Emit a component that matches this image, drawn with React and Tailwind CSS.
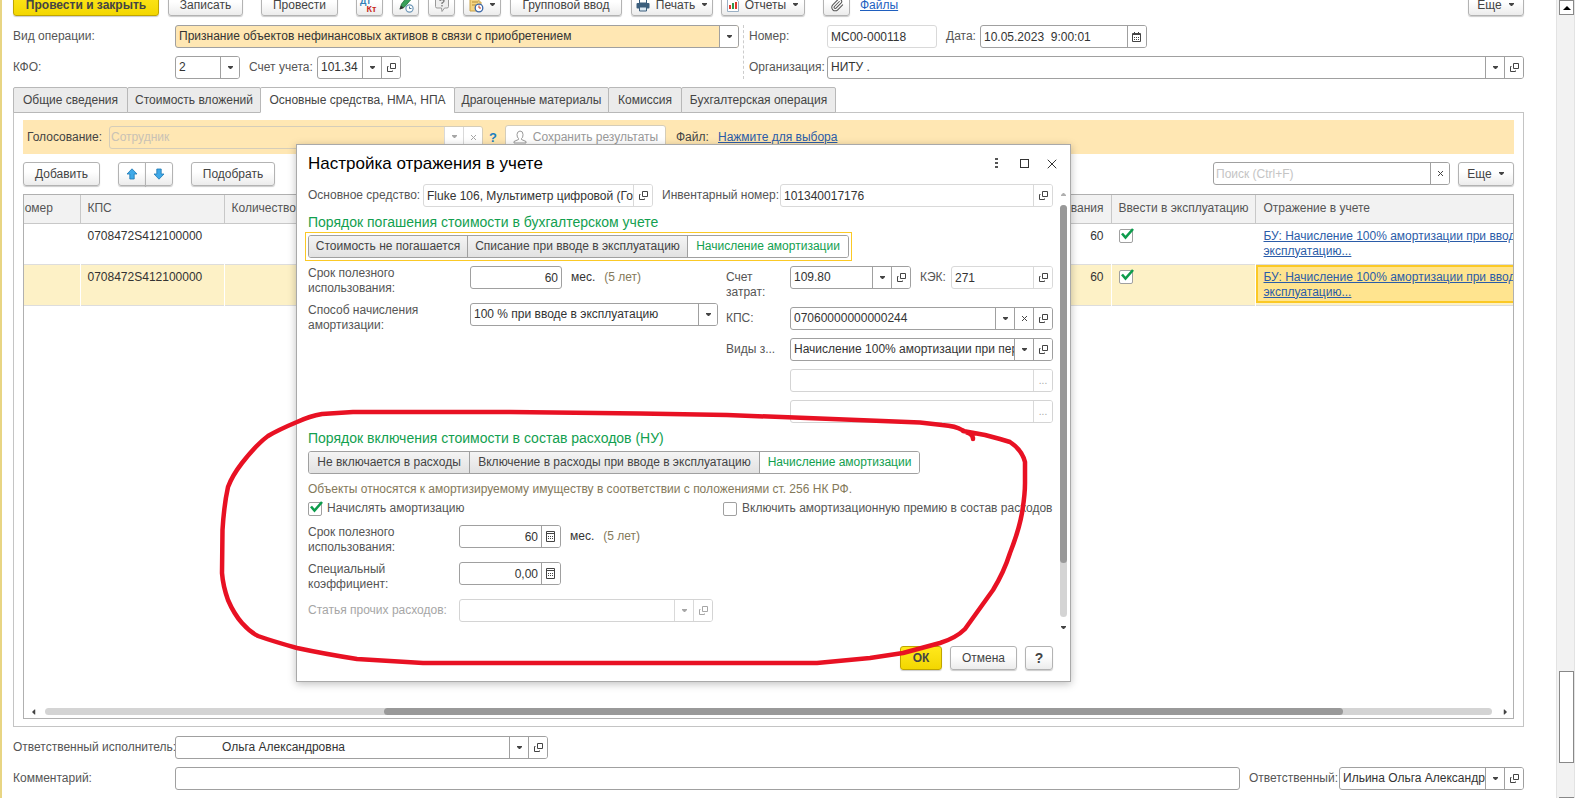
import { useId } from 'react';
import { Paperclip, X } from 'lucide-react';

const DownIcon = ({ className = '' }) => (
  <svg className={className} width="7" height="4" viewBox="0 0 7 4" fill="currentColor" aria-hidden="true">
    <path d="M1 0h5v1L4 3H3L1 1z" />
  </svg>
);

const OpenIcon = () => (
  <svg width="11" height="11" viewBox="0 0 11 11" fill="none" stroke="currentColor" aria-hidden="true">
    <path d="M4.5 1.5h5v5h-5z" />
    <path d="M2.5 4.5h-1v5h5v-1" />
  </svg>
);

const ClearIcon = () => (
  <svg width="7" height="7" viewBox="0 0 7 7" stroke="currentColor" aria-hidden="true">
    <path d="M1 1l5 5M6 1L1 6" />
  </svg>
);

const CalcIcon = () => (
  <svg width="10" height="11" viewBox="0 0 10 11" fill="none" stroke="currentColor" aria-hidden="true">
    <path d="M0.5 0.5h8v10h-8zM1 2.5h7" />
    <path d="M2 5.5h5M2 7.5h5" strokeDasharray="1 1" />
  </svg>
);

const CalendarIcon = () => (
  <svg width="10" height="10" viewBox="0 0 10 10" fill="none" stroke="currentColor" aria-hidden="true">
    <path d="M0.5 1.5h8v8h-8z" />
    <path d="M1 2.5h7M2.5 0v2M6.5 0v2" />
    <path d="M2 5.5h5M2 7.5h5" strokeDasharray="1 1" />
  </svg>
);

const DotsIcon = () => <span className="text-[10px] leading-none">...</span>;

const fieldIcons = {
  open: { icon: OpenIcon, title: 'Открыть' },
  clear: { icon: ClearIcon, title: 'Очистить' },
  calc: { icon: CalcIcon, title: 'Калькулятор' },
  calendar: { icon: CalendarIcon, title: 'Календарь' },
  dots: { icon: DotsIcon, title: 'Выбрать' },
};

const fieldTones = {
  normal: 'border-[#a0a0a0] bg-white text-[#333]',
  readonly: 'border-[#d9d9d9] bg-white text-[#333]',
  disabled: 'border-[#d4d4d4] bg-white text-[#999]',
  accent: 'border-[#a0a0a0] bg-[#ffe7b3] text-[#333]',
  vote: 'border-[#d5cdb9] bg-[#ffe7b3] text-[#c9c2b5]',
};

// Input or drop-down with the small buttons at its right edge
const Box = ({ id, label, value = '', placeholder, tone = 'normal', buttons = [], className = '', inputClass = 'px-[3px]' }) => {
  const isSelect = buttons.includes('down');
  const disabled = tone === 'disabled' || tone === 'vote';
  const inner = `min-w-0 flex-1 h-full bg-transparent appearance-none outline-none disabled:opacity-100 ${inputClass}`;

  return (
    <div className={`flex h-[23px] min-w-0 overflow-hidden rounded-[3px] border ${fieldTones[tone]} ${className}`}>
      {isSelect ? (
        <select id={id} aria-label={label} className={inner} defaultValue={value} disabled={disabled}>
          <option value={value}>{value}</option>
        </select>
      ) : (
        <input
          id={id}
          aria-label={label}
          type="text"
          className={`${inner} placeholder:text-[#c4c4c4]`}
          defaultValue={value}
          placeholder={placeholder}
          disabled={disabled}
          readOnly={tone === 'readonly'}
        />
      )}
      {buttons.map((name) => {
        const cell = `flex w-[19px] shrink-0 items-center justify-center border-l bg-white ${
          disabled || tone === 'readonly' ? 'border-[#d9d9d9]' : 'border-[#a0a0a0]'
        } ${disabled ? 'text-[#a6a6a6]' : 'text-[#444]'}`;
        if (name === 'down') {
          return (
            <span key={name} className={`${cell} pointer-events-none`}>
              <DownIcon />
            </span>
          );
        }
        const Icon = fieldIcons[name].icon;
        return (
          <button key={name} type="button" title={fieldIcons[name].title} className={cell} disabled={disabled}>
            <Icon />
          </button>
        );
      })}
    </div>
  );
};

const Field = ({ label, labelClass = '', className = '', children, ...box }) => {
  const id = useId();
  return (
    <div className={`flex min-w-0 items-start ${className}`}>
      <label htmlFor={id} className={`shrink-0 ${labelClass}`}>
        {label}
      </label>
      <Box id={id} {...box} className={box.boxClass} />
      {children}
    </div>
  );
};

const Button = ({ children, primary, className = '', ...rest }) => (
  <button
    type="button"
    className={`flex h-6 shrink-0 items-center justify-center rounded-[3px] border whitespace-nowrap shadow-[0_1px_1px_rgba(0,0,0,0.2)] ${
      primary
        ? 'border-[#c0a500] bg-linear-to-b from-[#ffe81a] to-[#f3d700] font-bold text-[#444]'
        : 'border-[#b3b3b3] bg-linear-to-b from-white from-40% to-[#ececec] text-[#444]'
    } ${className}`}
    {...rest}
  >
    {children}
  </button>
);

const Check = ({ label, hiddenLabel, defaultChecked }) => (
  <label className="flex items-center gap-[5px] whitespace-nowrap">
    <span className="relative block size-[14px] shrink-0">
      <input
        type="checkbox"
        aria-label={hiddenLabel}
        defaultChecked={defaultChecked}
        className="peer block size-[14px] appearance-none rounded-[2px] border border-[#a0a0a0] bg-white"
      />
      <svg
        className="pointer-events-none absolute -top-px left-[2px] hidden peer-checked:block"
        width="13"
        height="13"
        viewBox="0 0 13 13"
        fill="none"
        stroke="#0d9c4c"
        strokeWidth="2.6"
        aria-hidden="true"
      >
        <path d="M1 5.5l3.5 4L12 1" />
      </svg>
    </span>
    {label}
  </label>
);

const Segmented = ({ name, items, active, focused }) => (
  <div className={`-m-[3px] w-fit border p-[2px] ${focused ? 'border-[#fbc926]' : 'border-transparent'}`}>
    <div role="group" aria-label={name} className="flex h-[23px] rounded-[3px] border border-[#a0a0a0]">
      {items.map((item) => (
        <button
          key={item.text}
          type="button"
          aria-pressed={item.text === active}
          className={`border-l border-[#a0a0a0] text-center whitespace-nowrap first:rounded-l-[2px] first:border-l-0 last:rounded-r-[2px] ${item.width} ${
            item.text === active ? 'bg-white text-[#12a04f]' : 'bg-linear-to-b from-[#f4f4f4] to-[#e2e2e2] text-[#444]'
          }`}
        >
          {item.text}
        </button>
      ))}
    </div>
  </div>
);

const SectionTitle = ({ children }) => (
  <h3 className="flex h-7 items-center pt-[2px] text-[14px] whitespace-nowrap text-[#12a04f]">{children}</h3>
);

const ArrowIcon = ({ className = '' }) => (
  <svg className={className} width="12" height="12" viewBox="0 0 12 12" fill="#3fa9e8" stroke="#1f78b4" strokeWidth="0.8" aria-hidden="true">
    <path d="M6 0.8L11 6H8.2v5H3.8V6H1z" />
  </svg>
);

const Toolbar = () => (
  <div className="-mt-2 flex shrink-0 [&>button]:pt-[2px]">
    <Button primary className="w-[146px]">Провести и закрыть</Button>
    <Button className="ml-[9px] w-[75px]">Записать</Button>
    <Button className="ml-[18px] w-[77px]">Провести</Button>
    <Button className="ml-[18px] w-[27px]" title="Дт/Кт">
      <span className="flex flex-col text-[9px] leading-[8px] font-bold">
        <span className="pr-2 text-[#2f7fb5]">Дт</span>
        <span className="pl-1 text-[#c9281e]">Кт</span>
      </span>
    </Button>
    <Button className="ml-[9px] w-[27px]" title="Проверить">
      <svg width="16" height="16" viewBox="0 0 16 16" fill="none" aria-hidden="true">
        <path d="M2 12l1.5-5L9 0l3.500 3L6.500 10z" fill="#39a05a" stroke="#1f6f3a" strokeWidth="0.8" />
        <path d="M1.500 12.500l1.500-4 3 2.500z" fill="#333" />
        <circle cx="11.500" cy="11.500" r="3.600" fill="#fff" stroke="#6d97b8" strokeWidth="1.200" />
        <path d="M11.500 9.500v2h2" stroke="#4a7799" />
      </svg>
    </Button>
    <Button className="ml-[9px] w-[27px]" title="Подсказка">
      <svg width="16" height="16" viewBox="0 0 16 16" fill="none" aria-hidden="true">
        <path d="M3 0.500h10q1.500 0 1.500 1.500v7.500q0 1.500-1.500 1.500h-2.500L8 14.500 7.500 11H3q-1.500 0-1.500-1.500V2q0-1.500 1.500-1.500z" fill="#eee" stroke="#999" />
        <path d="M6 4q0-1.500 2-1.500t2 1.500q0 1-2 2v1M8 8v1.500" stroke="#777" strokeWidth="1.300" />
      </svg>
    </Button>
    <Button className="ml-2 w-[38px] gap-[5px]" title="Создать на основании">
      <svg width="16" height="16" viewBox="0 0 16 16" fill="none" aria-hidden="true">
        <path d="M2 1h9v4h2v9H2z" fill="#f5d583" stroke="#c9a24b" />
        <path d="M4 5h6M4 8h4" stroke="#b58d36" />
        <circle cx="11" cy="11" r="3.800" fill="#fff" stroke="#3a66a8" strokeWidth="1.300" />
        <path d="M11 8.500v2.500h2" stroke="#c0392b" />
      </svg>
      <DownIcon />
    </Button>
    <Button className="ml-[9px] w-[112px]">Групповой ввод</Button>
    <Button className="ml-[9px] w-[82px] gap-[6px]">
      <svg width="14" height="14" viewBox="0 0 14 14" aria-hidden="true">
        <path d="M3.500 1h7v4h-7z" fill="#fff" stroke="#3c5f7d" />
        <rect x="0.500" y="5" width="13" height="5.500" rx="1" fill="#3c5f7d" />
        <path d="M3.500 9h7v4h-7z" fill="#dce9f3" stroke="#3c5f7d" />
      </svg>
      Печать
      <DownIcon />
    </Button>
    <Button className="ml-2 w-[84px] gap-[6px]">
      <svg width="12" height="14" viewBox="0 0 12 14" aria-hidden="true">
        <path d="M0.500 0.500h8l3 3v10H0.500z" fill="#fff" stroke="#9ab0c4" />
        <path d="M3 11V7" stroke="#e03a2d" strokeWidth="2" />
        <path d="M6 11V5" stroke="#2f9a4c" strokeWidth="2" />
        <path d="M9 11V4" stroke="#e03a2d" strokeWidth="2" />
      </svg>
      Отчеты
      <DownIcon />
    </Button>
    <Button className="ml-[18px] w-[27px]" title="Присоединенные файлы">
      <Paperclip size={14} strokeWidth={1.75} className="text-[#555]" />
    </Button>
    <a href="#files" className="ml-[10px] self-center pt-[2px] text-[#1f5fbf] underline">Файлы</a>
    <Button className="ml-auto w-14 gap-[6px]">Еще <DownIcon /></Button>
  </div>
);

const DocumentHeader = () => (
  <div className="mt-[9px] flex shrink-0">
    <div className="flex w-[726px] shrink-0 flex-col gap-2">
      <Field
        label="Вид операции:"
        labelClass="w-[162px] leading-[23px]"
        tone="accent"
        boxClass="flex-1"
        value="Признание объектов нефинансовых активов в связи с приобретением"
        buttons={['down']}
      />
      <div className="flex">
        <Field label="КФО:" labelClass="w-[162px] leading-[23px]" boxClass="w-[65px]" value="2" buttons={['down']} />
        <Field label="Счет учета:" className="ml-[9px]" labelClass="w-[68px] leading-[23px]" boxClass="w-[84px]" value="101.34" buttons={['down', 'open']} />
      </div>
    </div>
    <div className="ml-1 flex min-w-0 flex-1 flex-col gap-2 border-l border-dashed border-[#ccc] pl-[5px]">
      <div className="flex">
        <Field label="Номер:" labelClass="w-[78px] leading-[23px]" boxClass="w-[110px]" tone="readonly" value="МС00-000118" />
        <Field label="Дата:" className="ml-[9px]" labelClass="w-[34px] leading-[23px]" boxClass="w-[167px]" value="10.05.2023  9:00:01" buttons={['calendar']} />
      </div>
      <Field label="Организация:" labelClass="w-[78px] leading-[23px]" boxClass="flex-1" value="НИТУ ." buttons={['down', 'open']} />
    </div>
  </div>
);

const tabs = [
  { text: 'Общие сведения', width: 'w-[115px]' },
  { text: 'Стоимость вложений', width: 'w-[134px]' },
  { text: 'Основные средства, НМА, НПА', width: 'w-[195px]', active: true },
  { text: 'Драгоценные материалы', width: 'w-[155px]' },
  { text: 'Комиссия', width: 'w-[74px]' },
  { text: 'Бухгалтерская операция', width: 'w-[155px]' },
];

const Tabs = () => (
  <div role="tablist" className="relative z-10 mt-2 flex h-[26px] shrink-0">
    {tabs.map((tab) => (
      <button
        key={tab.text}
        type="button"
        role="tab"
        aria-selected={Boolean(tab.active)}
        className={`-mr-px rounded-t-[2px] border border-[#b8b8b8] whitespace-nowrap text-[#444] ${tab.width} ${
          tab.active ? 'border-b-white bg-white' : 'bg-[#ebebeb]'
        }`}
      >
        {tab.text}
      </button>
    ))}
  </div>
);

const VotingBar = () => (
  <div className="flex h-[34px] shrink-0 items-center bg-[#ffe7b3] text-[#444]">
    <Field label="Голосование:" className="ml-1" labelClass="w-[82px] leading-[23px]" boxClass="w-[374px]" tone="vote" value="Сотрудник" inputClass="px-px" buttons={['down', 'clear']} />
    <button type="button" className="ml-[6px] w-2 text-[13px] font-bold text-[#1c7fc0]">?</button>
    <button type="button" disabled className="ml-2 flex h-6 w-[161px] items-center justify-center gap-[6px] rounded-[3px] border border-[#d5cdb9] bg-white text-[#999]">
      <svg width="14" height="14" viewBox="0 0 14 14" fill="none" stroke="#999" aria-hidden="true">
        <path d="M7 1q3 0 3 3.500T8.500 8.500v1l4.500 2v1.500H1v-1.500l4.500-2v-1Q4 7.500 4 4.500T7 1z" />
      </svg>
      Сохранить результаты
    </button>
    <span className="ml-[10px] w-[42px]">Файл:</span>
    <a href="#choose" className="text-[#2b5ca8] underline">Нажмите для выбора</a>
  </div>
);

const rows = [
  { id: 1, kps: '0708472S412100000', months: 60, selected: false },
  { id: 2, kps: '0708472S412100000', months: 60, selected: true },
];

const AssetsTable = () => (
  <div className="mt-2 flex min-h-0 flex-1 flex-col overflow-hidden border border-[#b0b0b0]">
    <table className="w-full table-fixed border-collapse">
      <thead>
        <tr className="h-7 border-b border-[#c8c8c8] bg-[#f2f2f2] text-left text-[#555]">
          <th className="w-14 overflow-hidden border-r border-[#c8c8c8] font-normal">
            <span className="-ml-[6px] block">номер</span>
          </th>
          <th className="w-36 border-r border-[#c8c8c8] px-[7px] font-normal">КПС</th>
          <th className="border-r border-[#c8c8c8] px-[7px] font-normal">Количество</th>
          <th className="w-[200px] border-r border-[#c8c8c8] px-[7px] text-right font-normal whitespace-nowrap">Срок полезного использования</th>
          <th className="w-36 border-r border-[#c8c8c8] px-[7px] font-normal whitespace-nowrap">Ввести в эксплуатацию</th>
          <th className="w-[258px] px-2 font-normal">Отражение в учете</th>
        </tr>
      </thead>
      <tbody>
        {rows.map((row) => (
          <tr key={row.id} className={`h-[41px] border-b border-[#ddd] align-top text-[#333] ${row.selected ? 'bg-[#fdf1c6]' : ''}`}>
            <td className="border-r border-white" />
            <td className="border-r border-white px-[7px] pt-[5px]">{row.kps}</td>
            <td className="border-r border-white" />
            <td className="border-r border-white px-[7px] pt-[5px] text-right">{row.months}</td>
            <td className="border-r border-white px-[7px] pt-[5px]">
              <Check hiddenLabel="Ввести в эксплуатацию" defaultChecked />
            </td>
            <td className="overflow-hidden p-0 whitespace-nowrap">
              <div className={`h-[38px] border-2 border-r-0 pt-[3px] pl-[6px] ${row.selected ? 'border-[#fbc926] bg-[#ffe48f]' : 'border-transparent'}`}>
                <a href="#reflection" className="text-[#2b5ca8] underline">
                  БУ: Начисление 100% амортизации при вводе в
                  <br />
                  эксплуатацию...
                </a>
              </div>
            </td>
          </tr>
        ))}
      </tbody>
    </table>
    <div className="mt-auto mb-[3px] flex items-center text-[#444]">
      <DownIcon className="ml-[6px] rotate-90" />
      <div className="mr-[10px] ml-2 flex h-[7px] flex-1 rounded-full bg-[#d4d4d4]">
        <div className="ml-[23.4%] w-[66.3%] rounded-full bg-[#999]" />
      </div>
      <DownIcon className="mr-1 -rotate-90" />
    </div>
  </div>
);

const AssetsPanel = () => (
  <section className="-mt-px flex min-h-0 flex-1 flex-col border border-[#c4c4c4] px-[9px] py-[7px]">
    <VotingBar />
    <div className="mt-2 flex shrink-0">
      <Button className="w-[77px]">Добавить</Button>
      <Button className="ml-[18px] w-7 rounded-r-none" title="Вверх"><ArrowIcon /></Button>
      <Button className="-ml-px w-7 rounded-l-none" title="Вниз"><ArrowIcon className="rotate-180" /></Button>
      <Button className="ml-[18px] w-[84px]">Подобрать</Button>
      <Box label="Поиск" className="ml-auto w-[237px]" placeholder="Поиск (Ctrl+F)" buttons={['clear']} inputClass="px-[2px]" />
      <Button className="ml-2 w-14 gap-[6px]">Еще <DownIcon /></Button>
    </div>
    <AssetsTable />
  </section>
);

const DocumentFooter = () => (
  <div className="mt-[9px] flex shrink-0 flex-col gap-2 pb-2">
    <Field
      label="Ответственный исполнитель:"
      labelClass="w-[162px] leading-[23px] whitespace-nowrap"
      boxClass="w-[373px]"
      inputClass="pl-[46px]"
      value="Ольга Александровна"
      buttons={['down', 'open']}
    />
    <div className="flex">
      <Field label="Комментарий:" className="flex-1" labelClass="w-[162px] leading-[23px]" boxClass="flex-1" />
      <Field label="Ответственный:" className="ml-[9px]" labelClass="w-[90px] leading-[23px]" boxClass="w-[185px]" value="Ильина Ольга Александровна" inputClass="pl-[3px]" buttons={['down', 'open']} />
    </div>
  </div>
);

const Dialog = () => (
  <div
    role="dialog"
    aria-labelledby="dialog-title"
    className="absolute top-36 left-[296px] z-20 w-[775px] border border-[#a9a9a9] bg-white shadow-[0_2px_8px_rgba(0,0,0,0.25)]"
  >
    <div className="flex h-[39px] items-center pr-1 pb-[2px] pl-[11px]">
      <h2 id="dialog-title" className="flex-1 text-[17px] text-black">Настройка отражения в учете</h2>
      <button type="button" title="Еще" className="flex w-7 justify-center">
        <svg width="3" height="11" viewBox="0 0 3 11" fill="#555" aria-hidden="true">
          <path d="M0 0h3v2H0zM0 4h3v2H0zM0 8h3v2H0z" />
        </svg>
      </button>
      <button type="button" title="Развернуть" className="flex w-7 justify-center">
        <span className="size-[9px] border border-[#333]" />
      </button>
      <button type="button" title="Закрыть" className="flex w-7 justify-center">
        <X size={16} strokeWidth={1.5} className="text-[#333]" />
      </button>
    </div>

    <div className="flex pl-[11px]">
      <div className="min-w-0 flex-1">
        <div className="flex">
          <Field label="Основное средство:" labelClass="w-[115px] leading-[23px] whitespace-nowrap" boxClass="w-[230px]" tone="readonly" value="Fluke 106, Мультиметр цифровой (Госреестр)" inputClass="pl-[3px]" buttons={['open']} />
          <Field label="Инвентарный номер:" className="ml-[9px] flex-1" labelClass="w-[118px] leading-[23px] whitespace-nowrap" boxClass="flex-1" tone="readonly" value="101340017176" buttons={['open']} />
        </div>

        <SectionTitle>Порядок погашения стоимости в бухгалтерском учете</SectionTitle>
        <Segmented
          name="Порядок погашения стоимости"
          focused
          active="Начисление амортизации"
          items={[
            { text: 'Стоимость не погашается', width: 'w-[158px]' },
            { text: 'Списание при вводе в эксплуатацию', width: 'w-[220px]' },
            { text: 'Начисление амортизации', width: 'w-[161px]' },
          ]}
        />

        <div className="mt-2 flex">
          <div className="flex w-[418px] shrink-0 flex-col gap-[7px]">
            <Field label={<>Срок полезного<br />использования:</>} labelClass="w-[162px]" boxClass="w-[92px]" inputClass="px-[3px] text-right" value="60">
              <span className="ml-[9px] leading-[23px] text-[#333]">мес.</span>
              <span className="ml-[9px] leading-[23px] text-[#84795a]">(5 лет)</span>
            </Field>
            <Field label={<>Способ начисления<br />амортизации:</>} labelClass="w-[162px]" boxClass="w-[248px]" value="100 % при вводе в эксплуатацию" buttons={['down']} />
          </div>
          <div className="flex min-w-0 flex-1 flex-col gap-2">
            <div className="flex h-[33px]">
              <Field label={<>Счет<br />затрат:</>} labelClass="w-16 pt-1" boxClass="w-[121px]" value="109.80" buttons={['down', 'open']} />
              <Field label="КЭК:" className="ml-[9px] flex-1" labelClass="w-[31px] leading-[23px]" boxClass="flex-1" tone="readonly" value="271" buttons={['open']} />
            </div>
            <Field label="КПС:" labelClass="w-16 leading-[23px]" boxClass="flex-1" value="07060000000000244" buttons={['down', 'clear', 'open']} />
            <Field label="Виды з..." labelClass="w-16 leading-[23px]" boxClass="flex-1" value="Начисление 100% амортизации при передаче" inputClass="pl-[3px]" buttons={['down', 'open']} />
            <Box label="Субконто 2" className="ml-16" tone="disabled" buttons={['dots']} />
            <Box label="Субконто 3" className="ml-16" tone="disabled" buttons={['dots']} />
          </div>
        </div>

        <SectionTitle>Порядок включения стоимости в состав расходов (НУ)</SectionTitle>
        <Segmented
          name="Порядок включения стоимости"
          active="Начисление амортизации"
          items={[
            { text: 'Не включается в расходы', width: 'w-[160px]' },
            { text: 'Включение в расходы при вводе в эксплуатацию', width: 'w-[290px]' },
            { text: 'Начисление амортизации', width: 'w-[160px]' },
          ]}
        />
        <p className="mt-2 text-[#84795a]">Объекты относятся к амортизируемому имуществу в соответствии с положениями ст. 256 НК РФ.</p>
        <div className="mt-1 flex h-[15px] items-center">
          <div className="w-[415px] shrink-0">
            <Check label="Начислять амортизацию" defaultChecked />
          </div>
          <Check label="Включить амортизационную премию в состав расходов" />
        </div>

        <div className="mt-[9px] flex flex-col gap-[7px]">
          <Field label={<>Срок полезного<br />использования:</>} labelClass="w-[151px]" boxClass="w-[102px]" inputClass="px-[3px] text-right" value="60" buttons={['calc']}>
            <span className="ml-[9px] leading-[23px] text-[#333]">мес.</span>
            <span className="ml-[9px] leading-[23px] text-[#84795a]">(5 лет)</span>
          </Field>
          <Field label={<>Специальный<br />коэффициент:</>} labelClass="w-[151px]" boxClass="w-[102px]" inputClass="px-[3px] text-right" value="0,00" buttons={['calc']} />
          <Field label="Статья прочих расходов:" labelClass="w-[151px] leading-[23px] whitespace-nowrap text-[#a6a6a6]" boxClass="w-[254px]" tone="disabled" buttons={['down', 'open']} />
        </div>
      </div>

      <div className="mr-[3px] ml-[7px] flex w-[7px] shrink-0 flex-col items-center pt-2">
        <DownIcon className="rotate-180 text-[#b0b0b0]" />
        <div className="mt-[9px] h-[412px] w-full rounded-full bg-[#d4d4d4]">
          <div className="h-[87%] rounded-full bg-[#999]" />
        </div>
        <DownIcon className="mt-[9px] text-[#444]" />
      </div>
    </div>

    <div className="mt-4 flex justify-end gap-2 pr-[17px] pb-[11px]">
      <Button primary className="w-[42px]">ОК</Button>
      <Button className="w-[67px]">Отмена</Button>
      <Button className="w-7 text-[14px] font-bold">?</Button>
    </div>
  </div>
);

// Hand-drawn marker loop around the tax accounting block
const MarkerLoop = () => (
  <svg
    className="pointer-events-none absolute top-[400px] left-[210px] z-30"
    width="830"
    height="275"
    viewBox="210 400 830 275"
    fill="none"
    stroke="#e81123"
    strokeWidth="4.5"
    strokeLinecap="round"
    strokeLinejoin="round"
    aria-hidden="true"
  >
    <path d="M973 439Q973 435 968 433L962 430Q956 426 942 425L920 422.500L807 418L727 415L640 413.500L510 412H353L322 414Q310 416 297 422Q278 430 268 436Q257 444 242 463Q232 476 228 487Q224 505 222.500 530L222 573Q223 586 228 600Q234 614 242 623Q250 632 258 636Q272 641 297 648Q325 654 357 659L423 663H817L870 658L903 653L940 643Q956 638 965 629L993 590Q1004 572 1010 553Q1019 530 1022 513Q1025 495 1025 483V462Q1022 450 1010 442L1000 439L985 435L963 431" />
  </svg>
);

const PageScrollbar = () => (
  <div className="flex w-[19px] shrink-0 flex-col border-x border-[#e3e3e3] bg-[#f2f2f2] pl-[2px]">
    <button type="button" title="Вверх" className="flex h-[15px] w-[15px] items-center justify-center border border-[#888] bg-white text-black">
      <svg width="8" height="4" viewBox="0 0 8 4" fill="currentColor" aria-hidden="true">
        <path d="M4 0l4 4H0z" />
      </svg>
    </button>
    <div className="mt-auto mb-[34px] h-[92px] w-[15px] border border-[#888] bg-white" />
    <div className="h-px w-[15px] bg-[#888]" />
  </div>
);

export default function App() {
  return (
    <div className="relative flex h-screen overflow-hidden bg-white font-['Liberation_Sans',Arial,sans-serif] text-[12px] leading-[15px] text-[#555]">
      <div className="w-[2px] shrink-0 bg-[#e8d583]" />
      <main className="flex min-w-0 flex-1 flex-col pr-8 pl-[11px]">
        <Toolbar />
        <DocumentHeader />
        <Tabs />
        <AssetsPanel />
        <DocumentFooter />
      </main>
      <PageScrollbar />
      <Dialog />
      <MarkerLoop />
    </div>
  );
}
